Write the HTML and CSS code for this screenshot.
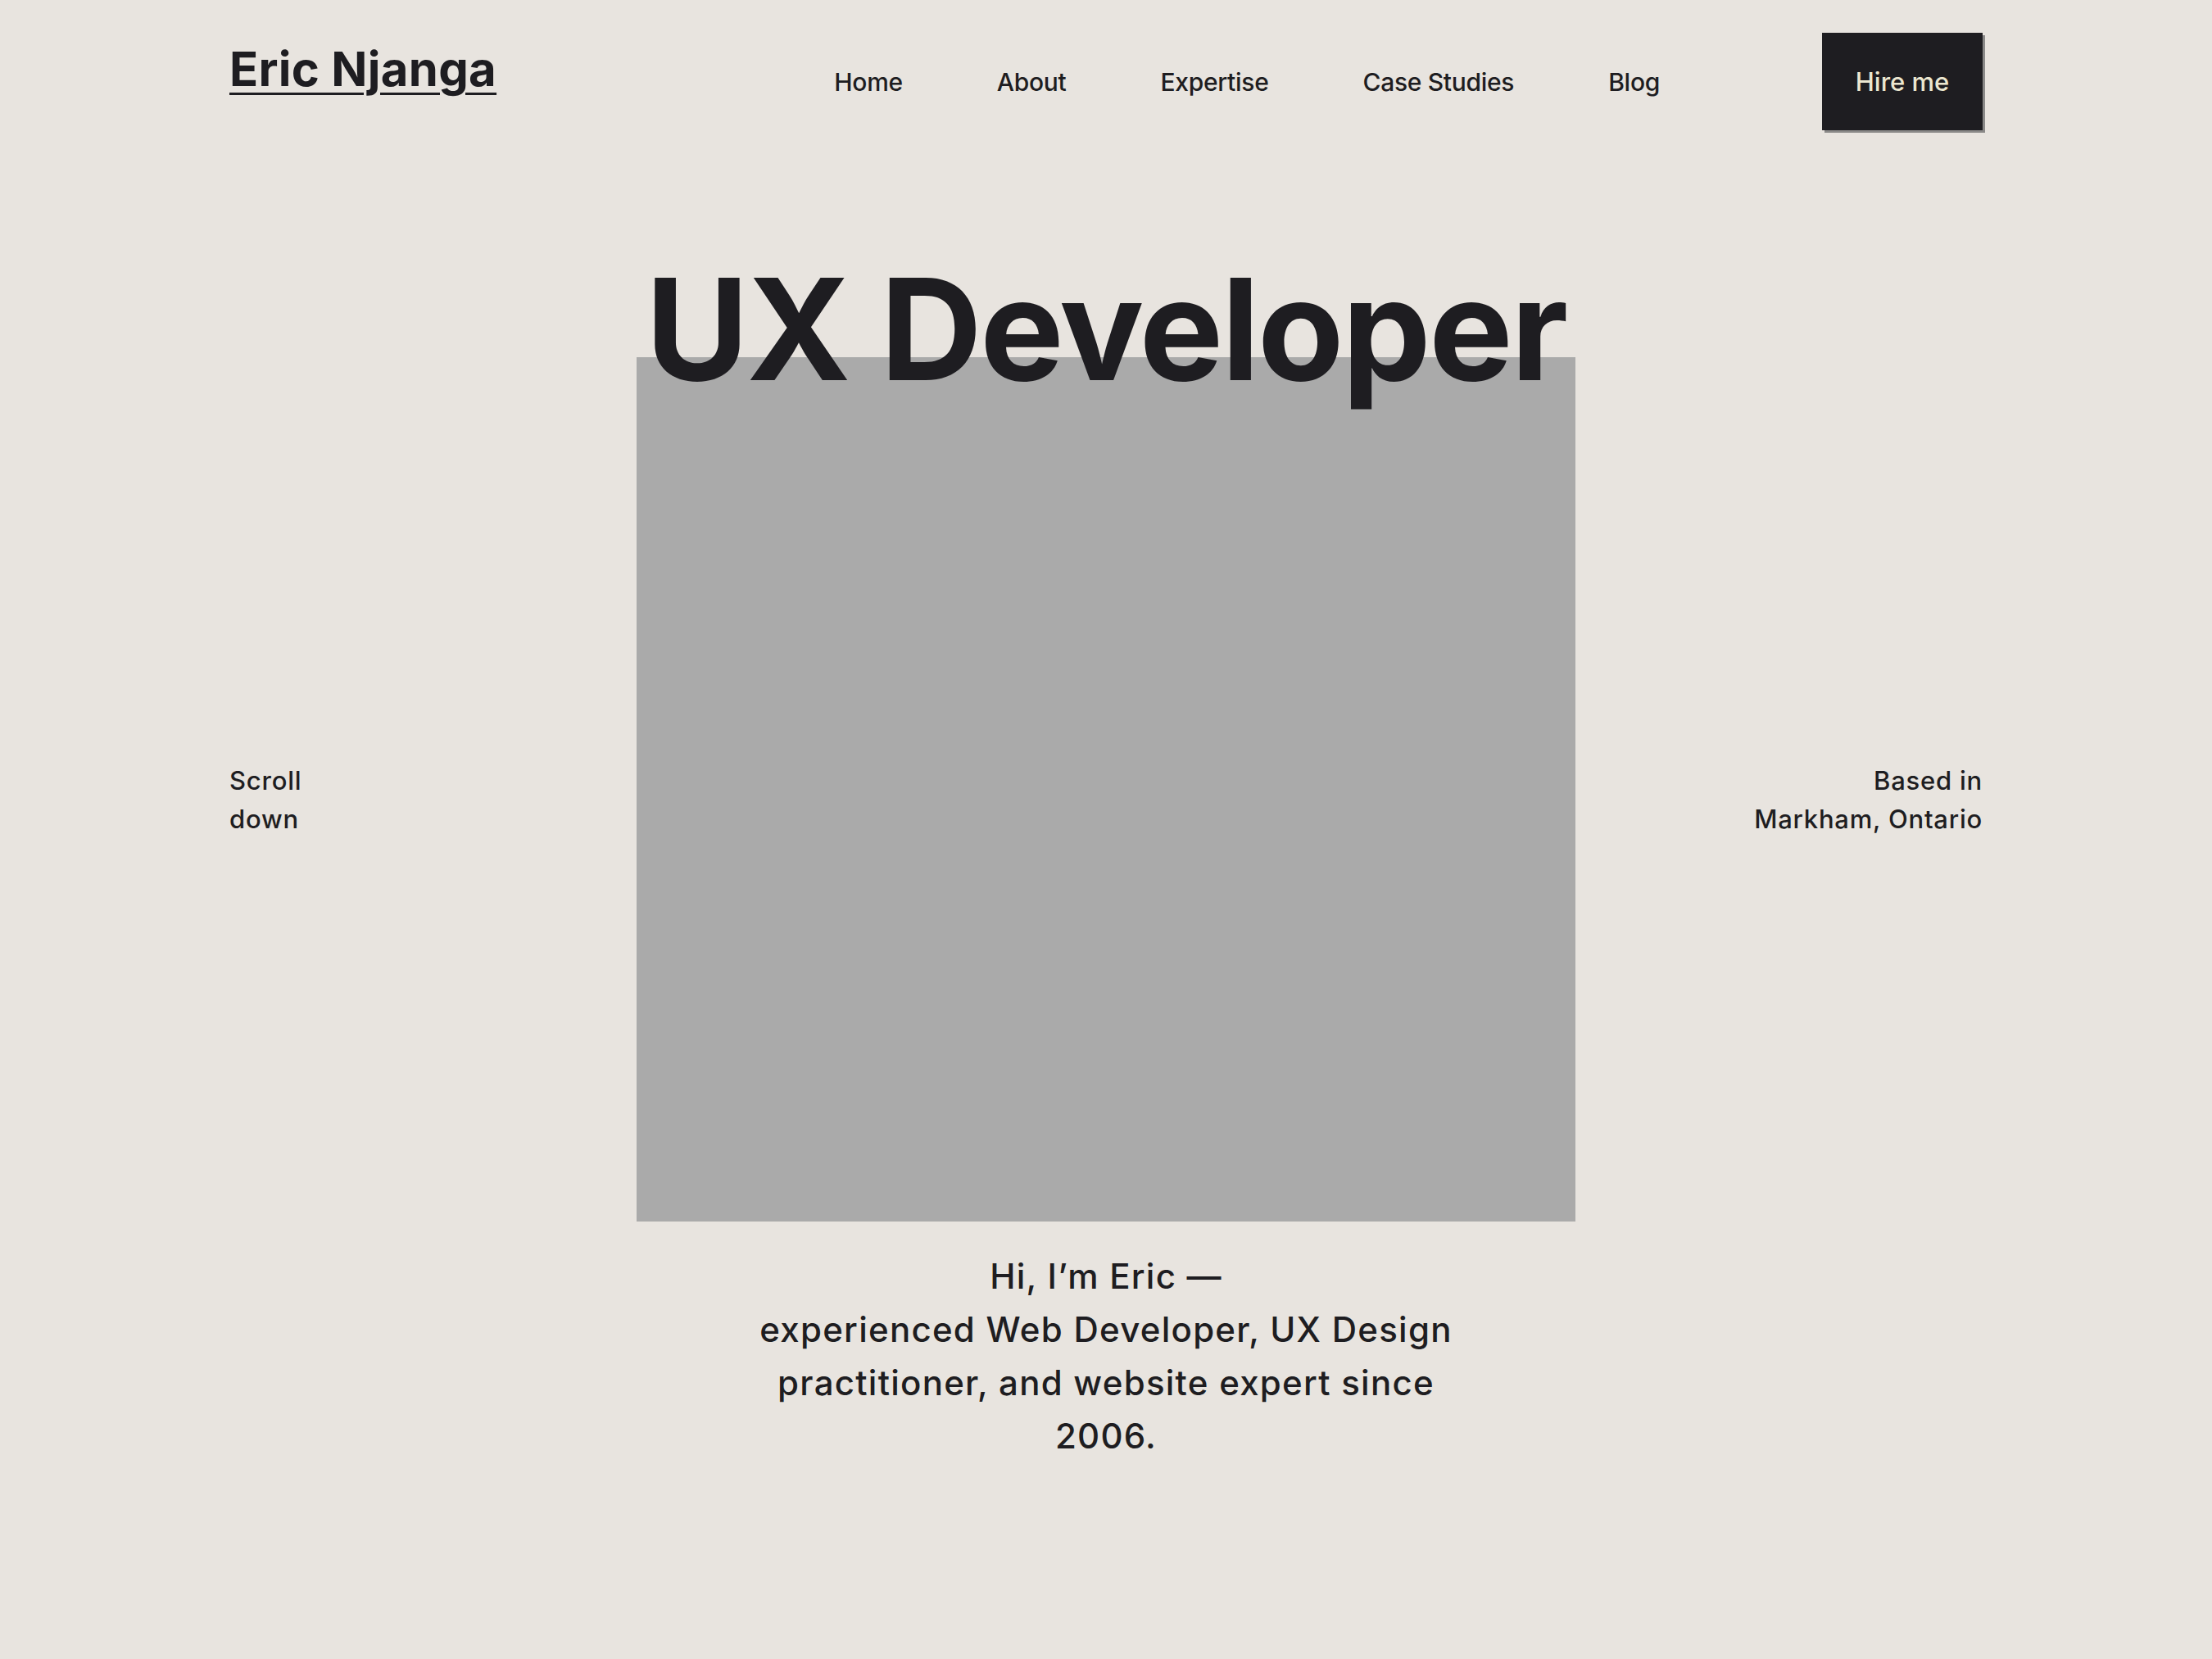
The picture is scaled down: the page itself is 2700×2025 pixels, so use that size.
FILE: index.html
```html
<!DOCTYPE html>
<html lang="en">
<head>
<meta charset="utf-8">
<title>Eric Njanga — UX Developer</title>
<link rel="stylesheet" href="styles.css">
</head>
<body>
<div class="page">
  <header class="site-header">
    <a class="logo" href="#">Eric Njanga</a>
    <nav class="main-nav">
      <a href="#">Home</a>
      <a href="#">About</a>
      <a href="#">Expertise</a>
      <a href="#">Case Studies</a>
      <a href="#">Blog</a>
    </nav>
    <a class="hire-btn" href="#">Hire me</a>
  </header>

  <main class="hero">
    <h1 class="hero-title">UX Developer</h1>
    <div class="hero-row">
      <div class="side side-left"><span>Scroll</span><span>down</span></div>
      <div class="hero-image"></div>
      <div class="side side-right"><span>Based in</span><span>Markham, Ontario</span></div>
    </div>
    <p class="intro">Hi, I’m Eric —<br>experienced Web Developer, UX Design practitioner, and website expert since 2006.</p>
  </main>
</div>
</body>
</html>
```

FILE: styles.css
```css
html, body {
  margin: 0;
  padding: 0;
}
body {
  background: #e8e4df;
  color: #1e1d21;
  font-family: Inter, "Noto Sans", "Liberation Sans", sans-serif;
  min-height: 2025px;
}
.page {
  max-width: 2140px;
  margin: 0 auto;
}
.site-header {
  display: flex;
  align-items: center;
  padding-top: 40px;
  height: 119px;
}
.logo {
  align-self: flex-start;
  margin-top: 15px;
  font-size: 58px;
  line-height: 1;
  font-weight: 700;
  color: #1e1d21;
  text-decoration: underline;
  text-decoration-thickness: 3px;
  text-underline-offset: 8px;
  letter-spacing: 0.005em;
}
.main-nav {
  margin-left: auto;
  margin-right: 198px;
  display: flex;
  gap: 115px;
}
.main-nav a {
  font-size: 30px;
  font-weight: 500;
  letter-spacing: -0.01em;
  color: #1e1d21;
  text-decoration: none;
}
.hire-btn {
  display: flex;
  align-items: center;
  justify-content: center;
  width: 196px;
  height: 119px;
  box-sizing: border-box;
  background: #1e1d21;
  color: #ece7d0;
  font-size: 31px;
  font-weight: 500;
  text-decoration: none;
  box-shadow: 3px 3px 0 #8a8988;
}
.hero {
  display: flex;
  flex-direction: column;
  align-items: center;
}
.hero-title {
  position: relative;
  z-index: 1;
  margin: 156px 0 -51px;
  font-size: 172px;
  line-height: 1;
  font-weight: 700;
  letter-spacing: -0.014em;
  color: #1e1d21;
}
.hero-row {
  width: 100%;
  display: grid;
  grid-template-columns: 1fr 1146px 1fr;
  align-items: center;
}
.hero-image {
  height: 1055px;
  background: #aaaaaa;
}
.side {
  display: flex;
  flex-direction: column;
  padding-top: 24px;
  font-size: 31px;
  line-height: 47px;
  font-weight: 500;
  letter-spacing: 0.025em;
}
.side-right {
  align-items: flex-end;
  text-align: right;
}
.intro {
  margin: 34px 0 0;
  max-width: 900px;
  text-align: center;
  font-size: 42px;
  line-height: 65px;
  font-weight: 500;
  letter-spacing: 0.03em;
}
```
